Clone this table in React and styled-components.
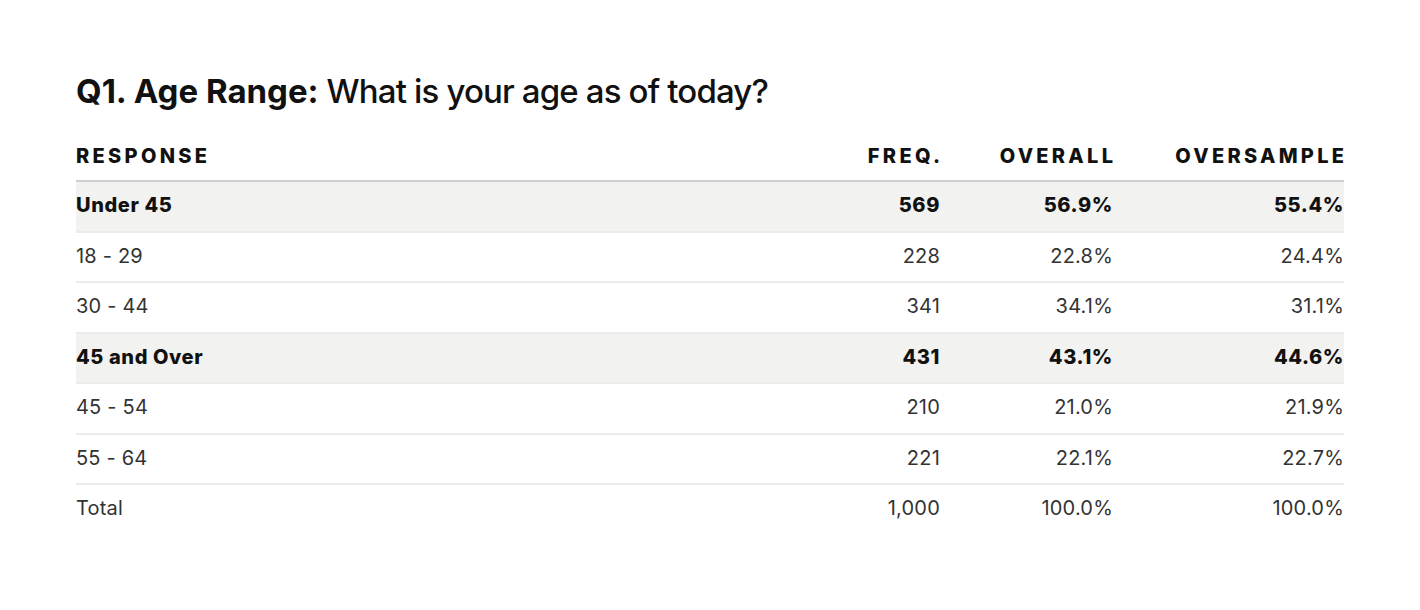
import React from "react";
import styled, { createGlobalStyle } from "styled-components";

const Global = createGlobalStyle`
  html, body { margin: 0; padding: 0; background: #fff; }
  body { font-family: Inter, "Liberation Sans", Arial, sans-serif; }
`;

const Page = styled.div`
  padding: 71px 76px 0 76px;
`;

const Title = styled.h2`
  margin: 0 0 34px 0;
  font-size: 33px;
  line-height: 40px;
  font-weight: 500;
  color: #111;
  letter-spacing: -0.85px;
  b { font-weight: 700; letter-spacing: 0; }
`;

const Table = styled.table`
  width: 100%;
  border-collapse: collapse;
`;

const HeadCell = styled.th`
  text-align: ${(p) => (p.$left ? "left" : "right")};
  width: ${(p) => p.$w || "auto"};
  font-size: 20px;
  font-weight: 800;
  letter-spacing: 3.3px;
  color: #111;
  padding: 0 0 13px 0;
  border-bottom: 2px solid #cfcfcd;
  line-height: 22px;
  span { margin-right: -3.3px; }
`;

const Row = styled.tr`
  background: ${(p) => (p.$group ? "#f2f2f0" : "transparent")};
  border-bottom: ${(p) => (p.$last ? "none" : "2px solid #ebebea")};
`;

const Cell = styled.td`
  text-align: ${(p) => (p.$left ? "left" : "right")};
  font-size: 20px;
  line-height: 22px;
  letter-spacing: ${(p) => (p.$group ? "0.6px" : "0.2px")};
  padding: 12px 0 14.5px 0;
  font-weight: ${(p) => (p.$group ? 800 : 400)};
  color: ${(p) => (p.$group ? "#111" : "#333")};
`;

const rows = [
  { label: "Under 45", freq: "569", overall: "56.9%", over: "55.4%", group: true },
  { label: "18 - 29", freq: "228", overall: "22.8%", over: "24.4%" },
  { label: "30 - 44", freq: "341", overall: "34.1%", over: "31.1%" },
  { label: "45 and Over", freq: "431", overall: "43.1%", over: "44.6%", group: true },
  { label: "45 - 54", freq: "210", overall: "21.0%", over: "21.9%" },
  { label: "55 - 64", freq: "221", overall: "22.1%", over: "22.7%" },
  { label: "Total", freq: "1,000", overall: "100.0%", over: "100.0%", last: true },
];

export default function App() {
  return (
    <Page>
      <Global />
      <Title>
        <b>Q1. Age Range:</b> What is your age as of today?
      </Title>
      <Table>
        <thead>
          <tr>
            <HeadCell $left><span>RESPONSE</span></HeadCell>
            <HeadCell $w="150px"><span>FREQ.</span></HeadCell>
            <HeadCell $w="173px"><span>OVERALL</span></HeadCell>
            <HeadCell $w="231px"><span>OVERSAMPLE</span></HeadCell>
          </tr>
        </thead>
        <tbody>
          {rows.map((r) => (
            <Row key={r.label} $group={r.group} $last={r.last}>
              <Cell $left $group={r.group}>{r.label}</Cell>
              <Cell $group={r.group}>{r.freq}</Cell>
              <Cell $group={r.group}>{r.overall}</Cell>
              <Cell $group={r.group}>{r.over}</Cell>
            </Row>
          ))}
        </tbody>
      </Table>
    </Page>
  );
}
